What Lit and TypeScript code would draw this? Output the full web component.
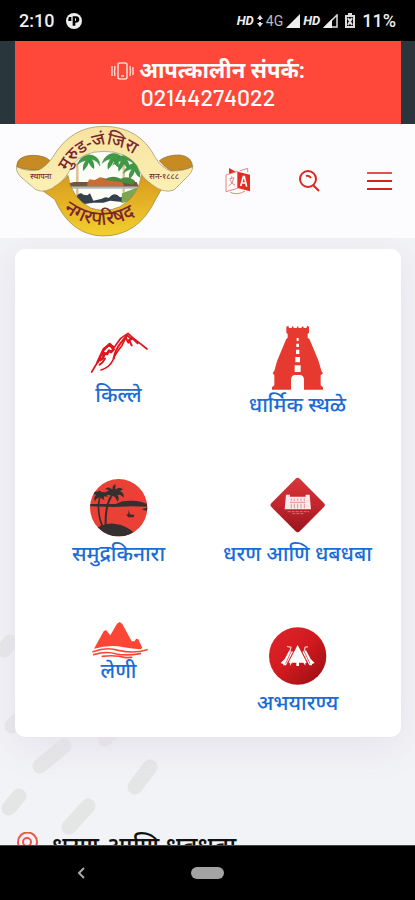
import { LitElement, html, css, svg } from "lit";
import { customElement } from "lit/decorators.js";

const killa = html`<svg class="icon" width="64" height="59" viewBox="80 42 192 177" aria-hidden="true">
  <g fill="none" stroke="#e0141c" stroke-linecap="round" stroke-linejoin="round">
    <path d="M94 186 L112 156 L126 126 L148 101 L162 112 L180 86 L203 70 L216 82 L236 98 L260 117" stroke-width="5" />
    <path d="M112 156 L130 118 L148 103 L160 118 L152 126 L146 122 L140 132 L132 130 L128 144 L120 150" stroke-width="8" />
    <path d="M122 180 Q148 172 158 150 Q164 132 184 108 L196 84" stroke-width="5" />
    <path d="M160 146 Q164 120 182 98 L200 76 L214 88 L206 90 L214 106 M196 82 L204 98" stroke-width="6" />
    <path d="M118 164 Q128 158 134 146 M214 82 L232 100" stroke-width="6" />
  </g>
</svg>`;

const temple = html`<svg class="icon" width="64" height="69" viewBox="106 42 192 207" aria-hidden="true">
  <path fill="#e63a31" d="M167 50 L173 47 L175 54 L183 54 L185 48 L190 54 L198 54 L201 47 L204 54 L212 54 L216 48 L220 54 L227 54 L230 47 L235 50 V68 L231 72 V84 L236 86 L264 154 L272 182 L277 190 L270 196 V226 L277 232 V239 H220 V208 Q219 197 210 195 H191 Q182 197 181 208 V239 H124 V232 L131 226 V196 L126 190 L131 182 L139 154 L167 86 L171 84 V72 L167 68Z" />
  <g fill="#fff"><path d="M198 84h6v9h-6zM197 101h8v10h-8zM196 119h10v13h-10zM194 141h14v16h-14zM192 166h18v20h-18z" /></g>
</svg>`;

const beach = html`<svg class="icon" width="64" height="69" viewBox="80 24 192 207" aria-hidden="true">
  <defs><clipPath id="disc"><circle cx="175" cy="128" r="86" /></clipPath></defs>
  <g clip-path="url(#disc)">
    <rect x="88" y="40" width="176" height="176" fill="#ea4035" />
    <path fill="#33302f" d="M88 117 H166 Q184 106 214 107 Q246 108 266 120 V125 L214 124 L160 126 L88 124Z" />
    <path fill="#33302f" d="M100 196 Q126 174 160 176 Q200 180 220 204 L196 222 H130Z" />
    <path fill="none" stroke="#33302f" stroke-width="6" d="M152 96 Q134 124 136 184" />
    <path fill="none" stroke="#33302f" stroke-width="5" d="M118 100 Q108 136 126 184" />
    <path fill="#33302f" d="M152 92 Q136 84 128 98 Q130 78 146 78 Q142 72 134 72 Q144 62 156 74 Q156 60 166 58 Q164 68 166 74 Q178 62 188 74 L178 78 Q192 82 190 98 Q180 86 172 90 Q178 102 172 110 Q164 94 158 92 Q148 100 146 110 Q142 98 152 92Z" />
    <path fill="#33302f" d="M118 98 Q106 98 104 110 Q98 96 108 90 Q98 84 96 92 Q96 78 112 80 Q120 74 124 82 Q138 78 142 96 Q130 92 130 96 L132 106 Q124 98 118 98Z" />
    <path fill="#33302f" d="M204 134 L209 148 L222 150 L220 157 H204 L198 149 L204 147Z M244 133 L262 127 V139Z" />
  </g>
</svg>`;

const dam = html`<svg class="icon" width="64" height="69" viewBox="151 24 192 207" aria-hidden="true">
  <defs><linearGradient id="ruby" x1="0" y1="0" x2="1" y2="1"><stop offset="0" stop-color="#d8383c" /><stop offset=".5" stop-color="#c2252d" /><stop offset="1" stop-color="#96161d" /></linearGradient></defs>
  <rect x="186" y="60" width="120" height="120" rx="9" fill="url(#ruby)" transform="rotate(45 246 120)" />
  <path fill="#fbe9ea" d="M211 89 H223 V95 H270 V89 H282 L286 133 H207Z" />
  <path fill="none" stroke="#d4686d" stroke-width="2" d="M227 100V108M236 100V108M246 100V108M256 100V108M266 100V108M227 116V130M236 116V130M246 116V130M256 116V130M266 116V130M223 112H270" />
  <path stroke="#e49a9d" stroke-width="2" stroke-dasharray="9 3" d="M216 140H280M230 146H264" />
</svg>`;

const caves = html`<svg class="icon" width="64" height="37" viewBox="80 48 192 111" aria-hidden="true">
  <path fill="#fb4636" d="M101 128 L130 76 L137 72 L150 88 L170 53 L178 48 L186 54 L214 106 L222 106 L228 98 L234 100 L246 126 L240 130 Q216 128 190 124 Q150 114 101 128Z" />
  <path fill="none" stroke="#fb4636" stroke-width="5" stroke-linecap="round" d="M98 137 Q138 122 174 133 Q222 144 260 131" />
  <path fill="none" stroke="#fb4636" stroke-width="5" stroke-linecap="round" d="M100 146 Q138 134 168 144 Q200 150 240 143 M126 151 Q164 146 196 155 L214 154" />
</svg>`;

const sanctuary = html`<svg class="icon" width="64" height="69" viewBox="106 21 192 207" aria-hidden="true">
  <defs><linearGradient id="crimson" x1="0" y1="0" x2="1" y2="1"><stop offset="0" stop-color="#e0242a" /><stop offset=".5" stop-color="#d01a1f" /><stop offset="1" stop-color="#930d11" /></linearGradient></defs>
  <circle cx="201" cy="123" r="86" fill="url(#crimson)" />
  <path fill="#fff" d="M201 90 L176 138 L174 143 L178 145 V152 L184 143 L197 143 V153 H205 V143 L218 143 L224 152 V145 L228 143 L226 138Z" />
  <path fill="#fff" d="M176 106 L162 132 L150 144 L158 147 V151 H166 L187 110Z M226 106 L240 132 L252 144 L244 147 V151 H236 L215 110Z" />
  <path fill="none" stroke="#f3b7b9" stroke-width="4" d="M169 94 L181 97 L178 108 M221 108 L223 97 L232 95" />
  <path stroke="#d01a1f" stroke-width="2" d="M182 108 L165 146 M220 108 L238 146" />
</svg>`;

const places = [
  ["किल्ले", killa],
  ["धार्मिक स्थळे", temple],
  ["समुद्रकिनारा", beach],
  ["धरण आणि धबधबा", dam],
  ["लेणी", caves],
  ["अभयारण्य", sanctuary],
] as const;

const frond = (x: number, y: number) => svg`<path transform="translate(${x} ${y})" fill="#3f9a46" stroke="#2c7a3a" stroke-width="1" d="M0 0 Q-26 4 -34 30 Q-20 18 -8 18 Q-20 30 -16 48 Q-2 34 0 22 Q6 38 16 42 Q18 24 8 14 Q24 16 34 34 Q34 10 12 2Z"/>`;

@customElement("app-root")
export class AppRoot extends LitElement {
  static styles = css`
    :host {
      display: flex;
      flex-direction: column;
      height: 100vh;
      font-family: Roboto, "Noto Sans", "Noto Sans Devanagari", sans-serif;
      background: #f2f3f6;
    }
    * { box-sizing: border-box; }
    svg { display: block; flex: none; }
    button { border: 0; padding: 0; background: none; cursor: pointer; }
    a { text-decoration: none; }
    .status {
      display: flex;
      align-items: center;
      justify-content: space-between;
      flex: none;
      height: 41px;
      padding: 0 19px;
      background: #000;
      color: #eee;
      font-size: 18px;
      font-weight: 500;
    }
    .cluster { display: flex; align-items: center; gap: 4px; }
    .clock { margin-right: 8px; }
    .signals { gap: 3px; }
    .hd { font-size: 13px; font-style: italic; font-weight: 700; }
    .net { font-size: 14px; font-weight: 400; color: #bbb; }
    .emergency {
      flex: none;
      padding: 0 14px 0 15px;
      background: #29363b;
    }
    .call {
      display: flex;
      flex-direction: column;
      align-items: center;
      padding: 16px 0 13px;
      background: #ff4839;
      color: #fff;
      font-size: 22px;
      font-weight: 700;
      line-height: 27px;
    }
    .call-title { display: flex; align-items: center; gap: 5px; }
    .number { font-family: Barlow, Roboto, sans-serif; font-size: 23px; font-weight: 500; }
    .header {
      display: flex;
      align-items: center;
      flex: none;
      height: 114px;
      padding: 0 15px;
      background: #fcfbfd;
    }
    .tools {
      display: flex;
      flex: 1;
      align-items: center;
      justify-content: space-between;
      padding-left: 30px;
    }
    .page { flex: 1; min-height: 0; overflow: hidden; position: relative; padding: 11px 14px 0 15px; }
    .pattern { position: absolute; left: 0; top: 0; }
    .card {
      position: relative;
      display: grid;
      grid-template-columns: 1fr 1fr;
      row-gap: 56px;
      padding: 75px 14px 22px;
      border-radius: 10px;
      background: #fff;
      box-shadow: 0 8px 40px #e4e0ea;
    }
    .place {
      display: flex;
      flex-direction: column;
      align-items: center;
      color: #1a6dd6;
      font-size: 21px;
      font-weight: 500;
      line-height: 24px;
      white-space: nowrap;
    }
    .section {
      position: relative;
      display: flex;
      align-items: center;
      gap: 14px;
      margin: 85px 0 0;
      padding-left: 2px;
      color: #111;
      font-size: 26px;
      font-weight: 500;
      line-height: 48px;
      white-space: nowrap;
    }
    .nav {
      display: grid;
      grid-template-columns: 1fr 1fr 1fr;
      align-items: center;
      justify-items: center;
      flex: none;
      height: 55px;
      background: #000;
      border-top: 1px solid #444;
    }
    .back { margin-left: 24px; }
    .home { width: 33px; height: 12px; border-radius: 6px; background: #a3a3a3; }
  `;

  render() {
    return html`
      <div class="status">
        <div class="cluster">
          <span class="clock">2:10</span>
          <svg width="16" height="16" viewBox="0 0 48 48" aria-hidden="true">
            <circle cx="24" cy="24" r="24" fill="#eee" />
            <path fill="#000" d="M20 10 H31 Q40 11 40 20 Q39 29 28 29 V38 H20Z M9 12 H16 V24 H7 Q6 17 9 12Z" />
            <path fill="#eee" d="M27 16 H30 V23 H27Z" />
          </svg>
        </div>
        <div class="cluster signals">
          <span class="hd">HD</span>
          <svg width="6" height="12" viewBox="0 0 6 12" aria-hidden="true"><path fill="#ddd" d="M3 0L6 4H4V5H2V4H0ZM3 12L0 8H2V7H4V8H6Z" /></svg>
          <span class="net">4G</span>
          <svg width="14" height="14" viewBox="0 0 14 14" aria-hidden="true"><path fill="#eee" d="M14 0V14H0Z" /></svg>
          <span class="hd">HD</span>
          <svg width="15" height="14" viewBox="0 0 15 14" aria-hidden="true"><path fill="none" stroke="#ddd" stroke-width="1.500" d="M14 1V13H2Z" /><path fill="#eee" d="M9 5V14H0Z" /></svg>
          <svg width="18" height="15" viewBox="-4 0 18 15" aria-hidden="true"><path fill="none" stroke="#ddd" stroke-width="2" d="M1 3H9V14H1ZM3 1H7M3 5L7 12M7 5L3 12" /></svg>
          <span>11%</span>
        </div>
      </div>

      <div class="emergency">
        <div class="call">
          <div class="call-title">
            <svg width="23" height="18" viewBox="0 0 23 18" fill="none" stroke="#ffd9d4" aria-hidden="true">
              <rect x="7" y="1" width="9" height="16" rx="2" stroke-width="1.500" />
              <path d="M10 14H13M4 4Q3 9 4 14M19 4Q20 9 19 14M1 4V14M22 5V13" stroke-width="1.400" />
            </svg>
            <span>आपत्कालीन संपर्क:</span>
          </div>
          <span class="number">02144274022</span>
        </div>
      </div>

      <header class="header">
        <svg width="180" height="112" viewBox="45 27 540 336" role="img" aria-label="मुरुड-जंजिरा नगरपरिषद">
          <defs>
            <linearGradient id="cream" x1="0" y1="0" x2="0" y2="1"><stop offset="0" stop-color="#f8e3a0" /><stop offset="1" stop-color="#fbf0b4" /></linearGradient>
            <linearGradient id="gold" x1="0" y1="0" x2="0" y2="1"><stop offset="0" stop-color="#d99a1e" /><stop offset="1" stop-color="#f2d02e" /></linearGradient>
            <path id="arch-top" d="M202 166 Q236 98 313 86 Q400 90 450 170" />
            <path id="arch-low" d="M188 284 Q310 376 450 270" />
          </defs>
          <ellipse cx="312" cy="190" rx="124" ry="92" fill="#fdfdf8" />
          <g stroke="#d9bf8a" stroke-width="7"><path d="M232 140 V240M371 140V230" /></g>
          ${frond(266, 116)}${frond(340, 112)}${frond(372, 118)}${frond(404, 142)}
          <path fill="#73543f" d="M208 202 L222 198 H410 L416 212 H208Z" />
          <path fill="#c96d34" d="M262 200 L268 190 L284 192 L300 184 L322 188 L340 184 L366 194 L372 210 H262Z" />
          <path fill="#4b8b3e" d="M312 192 Q336 174 362 188 Q384 176 406 196 L398 206 L362 198Z" />
          <path fill="#a7bac0" d="M214 212H410V218H214Z" />
          <path fill="#34404b" d="M230 240 Q240 226 250 236 L262 238 L270 232 L280 254 L306 248 Q316 240 326 246 Q344 224 360 244 L380 242 L366 258 L330 254 L310 260 L280 260 L254 264 L232 256Z" />
          <path fill="#7ea652" d="M366 232L414 214L392 254L364 262Z" />
          <path fill="url(#gold)" stroke="#9a7a30" stroke-width="2" d="M148 217 Q190 198 204 178 Q212 244 272 276 Q316 292 360 272 Q416 240 424 178 Q446 206 486 217 L466 252 Q414 360 308 360 Q212 358 164 250 L128 224Z" />
          <path fill="#c78b24" stroke="#8d6c2d" stroke-width="2" d="M50 152 Q50 120 96 118 Q134 118 150 134 Q136 152 118 162 Q76 162 50 152Z M578 152 Q576 122 540 117 Q500 116 478 134 Q492 152 512 164 Q552 164 578 152Z" />
          <path fill="url(#cream)" stroke="#9c8d5d" stroke-width="2" d="M50 152 Q80 168 116 162 Q136 154 158 124 Q212 31 312 31 Q418 32 466 124 Q482 154 512 165 Q552 166 578 152 Q578 170 556 188 L522 222 Q492 234 456 206 Q424 184 410 148 Q378 106 312 106 Q250 106 218 146 Q198 190 172 206 Q134 236 106 220 L66 186 Q46 168 50 152Z" />
          <g font-family="Noto Sans, Noto Sans Devanagari, sans-serif" fill="#7a2630">
            <text font-size="52" font-weight="500"><textPath href="#arch-top">मुरुड-जंजिरा</textPath></text>
            <text font-size="58" font-weight="500"><textPath href="#arch-low" startOffset="2">नगरपरिषद</textPath></text>
            <text x="91" y="189" font-size="23" font-weight="500">स्थापना</text>
            <text x="448" y="189" font-size="24" font-weight="500">सन-१८८८</text>
          </g>
        </svg>
        <div class="tools">
          <button aria-label="भाषा">
            <svg width="26" height="28" viewBox="60 80 78 84" fill="none" stroke="#e7857e" stroke-width="3" aria-hidden="true">
              <path d="M63 104 L98 93 V144 L63 154Z M103 92 L128 84 V96" />
              <path fill="#e9281e" stroke="none" d="M98 94 L135 103 V153 L98 143Z M72 83 L92 94 L72 100Z" />
              <path stroke="#fff" stroke-width="5" d="M107 137 L115 109 H118 L125 139 M109 128 H123" />
              <path d="M73 116 L88 112 M80 108 V114 M86 114 Q84 130 71 137 M75 118 Q80 132 90 134 M76 156 Q98 166 120 152" />
            </svg>
          </button>
          <button aria-label="शोधा">
            <svg width="22" height="22" viewBox="0 0 22 22" fill="none" stroke="#dc2620" stroke-width="2" aria-hidden="true">
              <circle cx="10" cy="9" r="8" /><path d="M15 15L21 21M8 6Q11 5 13 8" />
            </svg>
          </button>
          <button aria-label="मेनू">
            <svg width="34" height="22" viewBox="0 0 34 22" fill="none" stroke-width="2" aria-hidden="true">
              <path stroke="#e8504a" d="M1 3H26" /><path stroke="#d8211b" d="M1 11H26M1 19H26" />
            </svg>
          </button>
        </div>
      </header>

      <main class="page">
        <svg class="pattern" width="200" height="608" viewBox="0 238 200 608" fill="none" stroke="#e4e5e5" stroke-width="15" stroke-linecap="round" aria-hidden="true">
          <path d="M40 766L64 746M135 787L150 767M9 808L19 796M69 827L88 806M105 739L112 732M12 726L20 718M4 650L10 642" />
        </svg>
        <nav class="card">
          ${places.map(([name, icon]) => html`<a class="place" href="#">${icon}<span>${name}</span></a>`)}
        </nav>
        <h2 class="section">
          <svg width="21" height="28" viewBox="0 0 21 28" fill="none" stroke="#e8594b" stroke-width="2" aria-hidden="true">
            <path d="M10 27Q1 16 1 10A9 9 0 0 1 20 10Q20 16 10 27Z" /><circle cx="10" cy="10" r="4" />
          </svg>
          <span>धरण आणि धबधबा</span>
        </h2>
      </main>

      <div class="nav">
        <button class="back" aria-label="Back">
          <svg width="8" height="12" viewBox="0 0 8 12" fill="none" stroke="#aaa" stroke-width="2" aria-hidden="true"><path d="M7 1L2 6L7 11" /></svg>
        </button>
        <button class="home" aria-label="Home"></button>
      </div>
    `;
  }
}
